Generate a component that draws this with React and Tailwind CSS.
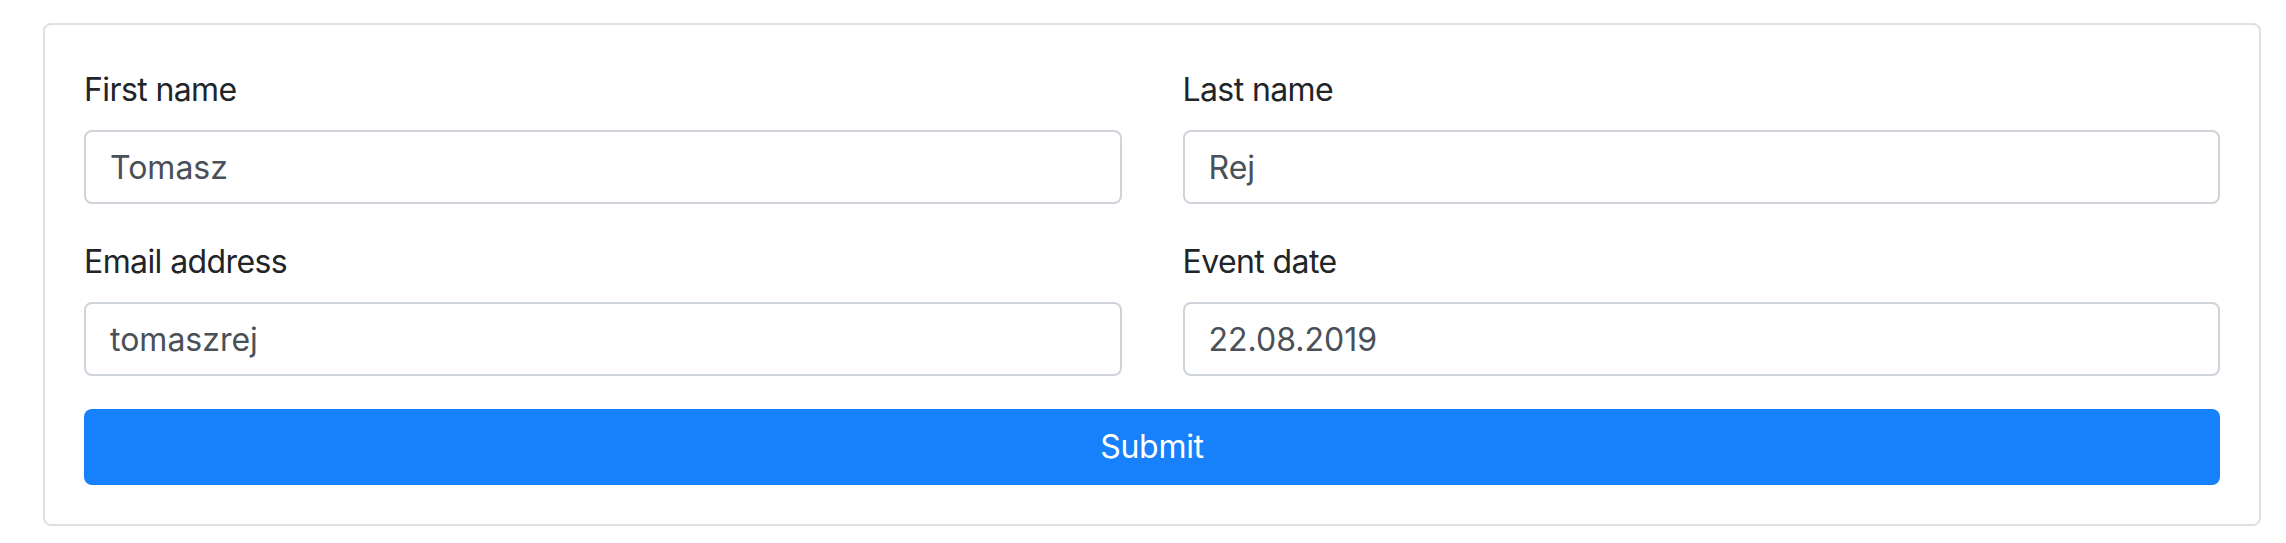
import { useState } from "react";

const fields = [
  { id: "firstName", label: "First name", value: "Tomasz", type: "text" },
  { id: "lastName", label: "Last name", value: "Rej", type: "text" },
  { id: "email", label: "Email address", value: "tomaszrej", type: "text" },
  { id: "eventDate", label: "Event date", value: "22.08.2019", type: "text" },
];

const Field = ({ id, label, value, onChange }) => (
  <div className="mb-[34px] flex flex-col">
    <label
      htmlFor={id}
      className="mb-[16px] text-[32px] leading-[48px] tracking-[-0.6px] text-[#212529]"
    >
      {label}
    </label>
    <input
      id={id}
      value={value}
      onChange={(e) => onChange(id, e.target.value)}
      className="h-[74px] w-full rounded-[8px] border-2 border-[#ced4da] bg-white px-[24px] text-[32px] text-[#495057] outline-none"
    />
  </div>
);

export default function App() {
  const [values, setValues] = useState(
    Object.fromEntries(fields.map((f) => [f.id, f.value])),
  );

  const handleChange = (id, value) =>
    setValues((prev) => ({ ...prev, [id]: value }));

  return (
    <div className="min-h-[543px] w-[2286px] bg-white pl-[43px] pt-[23px] font-['Inter','Liberation_Sans',sans-serif]">
      <form
        onSubmit={(e) => e.preventDefault()}
        className="w-[2218px] rounded-[8px] border-2 border-[#dfdfdf] px-[39px] pb-[39px] pt-[41px]"
      >
        <div className="grid grid-cols-2 gap-x-[61px]">
          {fields.map((f) => (
            <Field
              key={f.id}
              id={f.id}
              label={f.label}
              value={values[f.id]}
              onChange={handleChange}
            />
          ))}
        </div>
        <button
          type="submit"
          className="-mt-[1px] flex h-[76px] w-full items-center justify-center rounded-[8px] bg-[#1780fb] text-[32px] tracking-[-0.3px] text-white"
        >
          Submit
        </button>
      </form>
    </div>
  );
}
